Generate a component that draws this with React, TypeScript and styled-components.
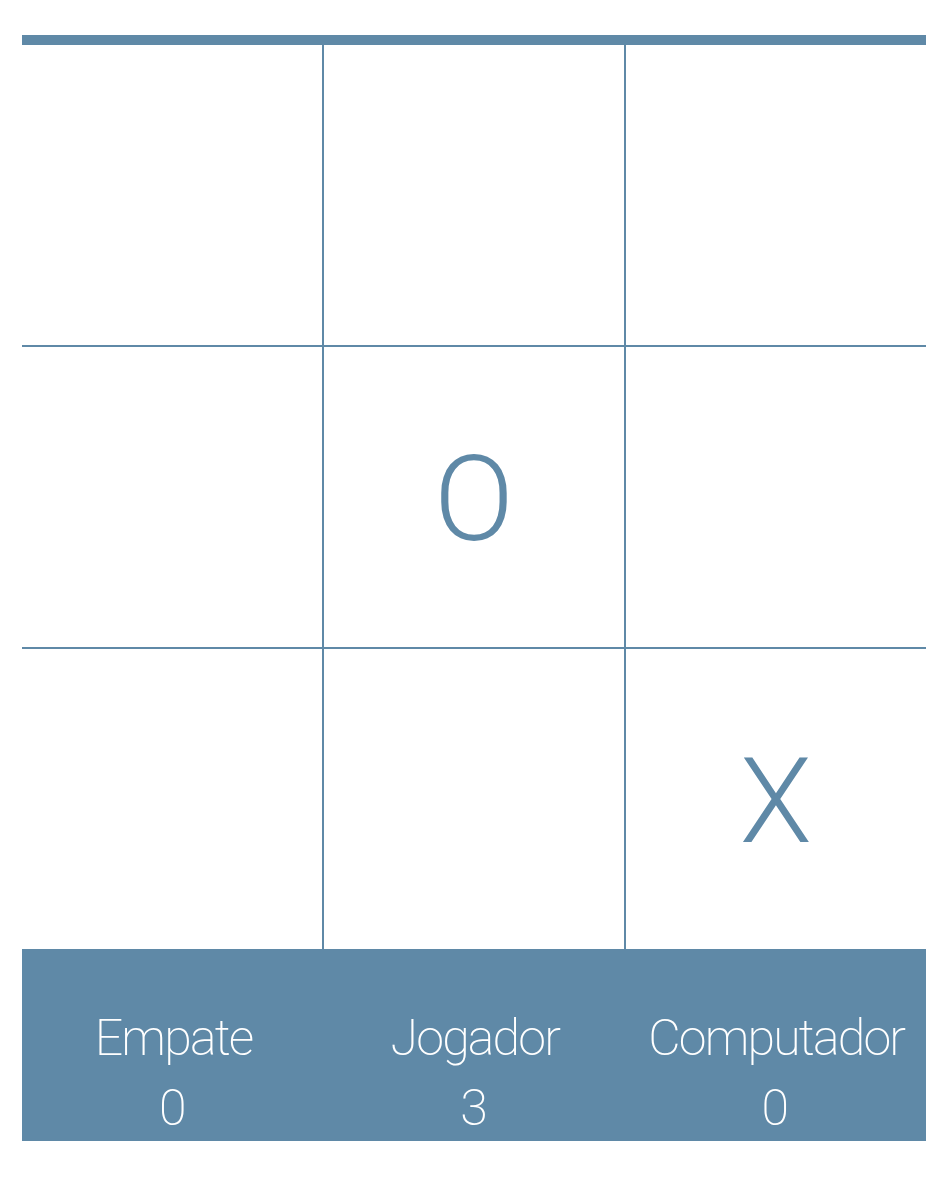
import React from "react";
import styled, { createGlobalStyle } from "styled-components";

const ACCENT = "#5f89a7";

const Global = createGlobalStyle`
  html, body { margin: 0; padding: 0; background: #ffffff; }
  body { font-family: Roboto, "Liberation Sans", sans-serif; }
`;

const Page = styled.div`
  padding: 35px 24px 0 22px;
  width: 904px;
`;

const Board = styled.div`
  display: grid;
  grid-template-columns: repeat(3, 300px);
  grid-template-rows: repeat(3, 300px);
  gap: 2px;
  background: ${ACCENT};
  border-top: 10px solid ${ACCENT};
`;

const Cell = styled.div`
  background: #ffffff;
  display: flex;
  align-items: center;
  justify-content: center;
  padding-top: 6px;
  box-sizing: border-box;
  font-family: Roboto, "Liberation Sans", sans-serif;
  font-weight: 300;
  font-size: 118px;
  line-height: 1;
  color: ${ACCENT};
`;

const Scoreboard = styled.div`
  display: grid;
  grid-template-columns: repeat(3, 1fr);
  height: 192px;
  box-sizing: border-box;
  padding-top: 54px;
  background: ${ACCENT};
`;

const Score = styled.div`
  display: flex;
  flex-direction: column;
  align-items: center;
  color: #ffffff;
  font-family: Roboto, "Liberation Sans", sans-serif;
  font-weight: 200;
  font-size: 50px;
  line-height: 70px;
`;

const Label = styled.span`
  letter-spacing: -1.8px;
  margin-right: -1.8px;
`;

const Value = styled.span``;

const cells = ["", "", "", "", "O", "", "", "", "X"];
const scores = [
  { label: "Empate", value: 0 },
  { label: "Jogador", value: 3 },
  { label: "Computador", value: 0 },
];

export default function App() {
  return (
    <>
      <Global />
      <Page>
        <Board>
          {cells.map((c, i) => (
            <Cell key={i}>{c}</Cell>
          ))}
        </Board>
        <Scoreboard>
          {scores.map((s) => (
            <Score key={s.label}>
              <Label>{s.label}</Label>
              <Value>{s.value}</Value>
            </Score>
          ))}
        </Scoreboard>
      </Page>
    </>
  );
}
